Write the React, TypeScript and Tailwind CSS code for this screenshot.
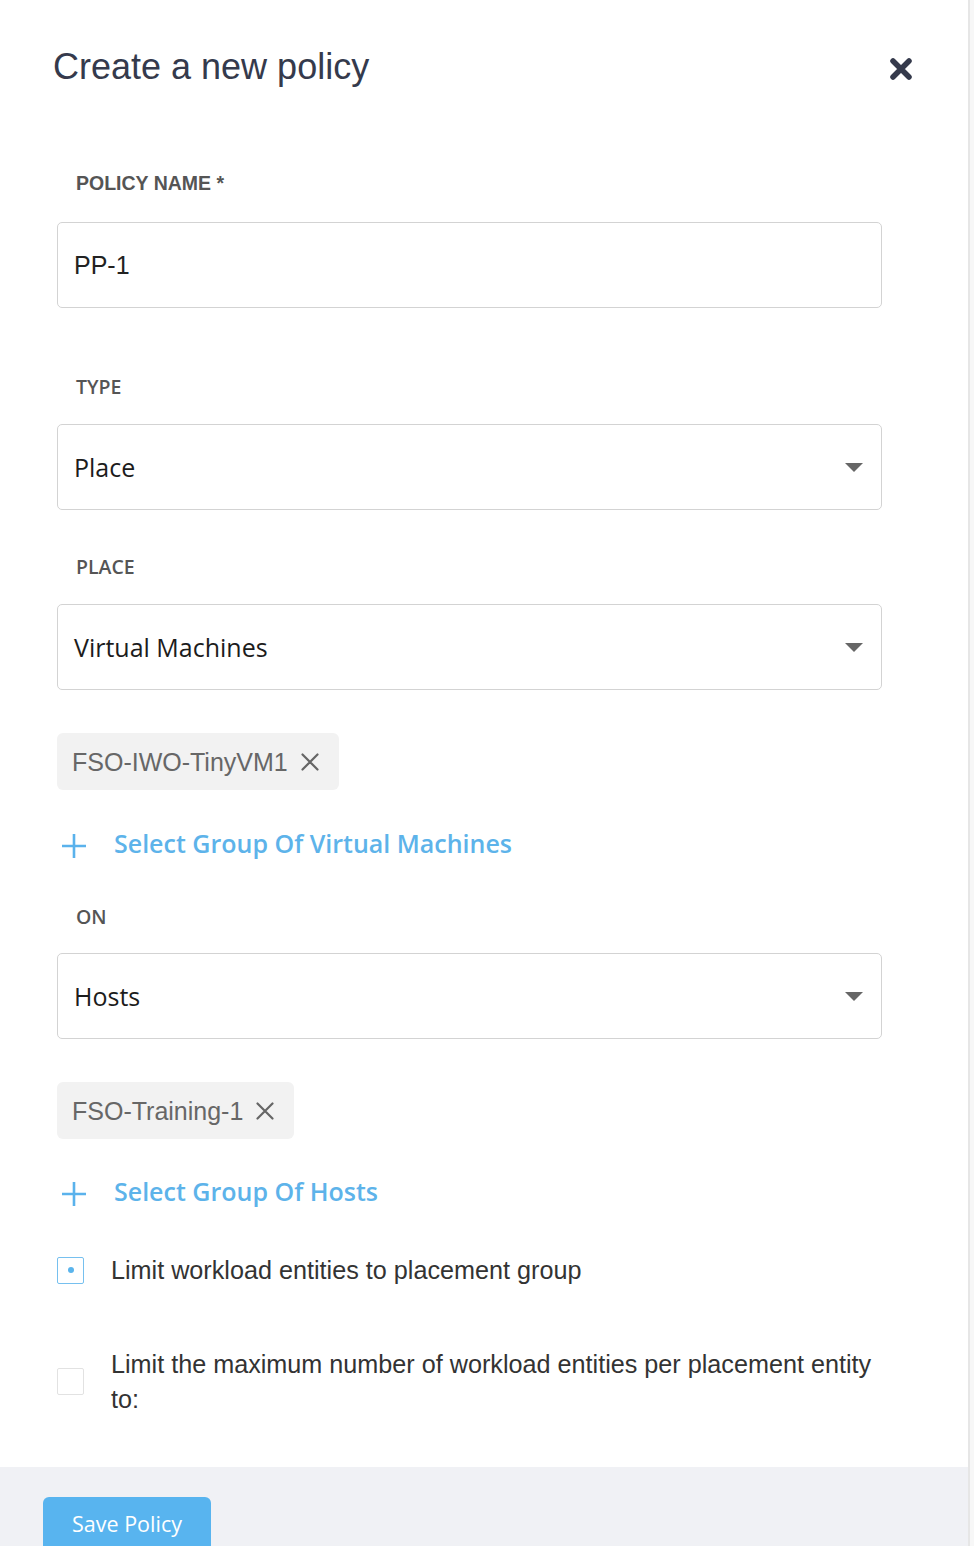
import React from "react";

const LIB = "font-['Liberation_Sans',Arial,sans-serif]";
const OPEN = "font-['Open_Sans',sans-serif]";

function Caret() {
  return (
    <svg width="18" height="9" viewBox="0 0 18 9" className="shrink-0">
      <path d="M0 0 H18 L9 9 Z" fill="#666666" />
    </svg>
  );
}

function SelectBox({ value, className = "" }: { value: string; className?: string }) {
  return (
    <div
      className={`h-[86px] w-[825px] rounded-[5px] border border-[#d3d3d3] bg-white flex items-center justify-between pl-[16px] pr-[18px] ${className}`}
    >
      <span className={`${OPEN} text-[25px] leading-[30px] text-[#1c1c1c]`}>{value}</span>
      <Caret />
    </div>
  );
}

function Label({ children, className = "" }: { children: React.ReactNode; className?: string }) {
  return (
    <div className={`${OPEN} pl-[19px] text-[19.5px] leading-[20px] font-semibold text-[#555555] ${className}`}>
      {children}
    </div>
  );
}

function Chip({ text, className = "" }: { text: string; className?: string }) {
  return (
    <div className={`flex ${className}`}>
      <div className="h-[57px] rounded-[6px] bg-[#f2f2f2] flex items-center pl-[15px] pr-[20px] gap-[13px]">
        <span className={`${LIB} text-[25px] leading-[30px] text-[#676767]`}>{text}</span>
        <svg width="18" height="18" viewBox="0 0 18 18">
          <path d="M1.5 1.5 L16.5 16.5 M16.5 1.5 L1.5 16.5" stroke="#666666" strokeWidth="2.2" strokeLinecap="round" />
        </svg>
      </div>
    </div>
  );
}

function AddLink({ text, className = "" }: { text: string; className?: string }) {
  return (
    <div className={`h-[40px] flex items-center ${className}`}>
      <svg width="26" height="26" viewBox="0 0 26 26" className="ml-[4px] mt-[6px] shrink-0">
        <path d="M13 1 V25 M1 13 H25" stroke="#5ab2ec" strokeWidth="2.6" />
      </svg>
      <span className={`${OPEN} ml-[27px] text-[25px] leading-[30px] font-semibold text-[#5db3ea]`}>{text}</span>
    </div>
  );
}

export default function App() {
  return (
    <div className="h-[1546px] w-[974px] overflow-hidden flex bg-white">
      <div className="w-[968px] flex flex-col">
        <div className="flex-1 flex flex-col pl-[57px]">
          {/* Header */}
          <div className="flex items-start justify-between pt-[47px] pr-[55px] ml-[-4px]">
            <h1 className={`${LIB} text-[36px] leading-[40px] text-[#353a4c] font-normal`}>Create a new policy</h1>
            <svg width="24" height="24" viewBox="0 0 24 24" className="mt-[10px]">
              <path d="M4 4 L20 20 M20 4 L4 20" stroke="#353a4c" strokeWidth="5.5" strokeLinecap="round" />
            </svg>
          </div>

          <div className={`${LIB} mt-[85.5px] pl-[19px] text-[19.5px] leading-[20px] font-bold text-[#555555]`}>
            POLICY NAME *
          </div>
          <div className="mt-[29.5px] h-[86px] w-[825px] rounded-[5px] border border-[#d3d3d3] flex items-center pl-[16px]">
            <span className={`${LIB} text-[25px] leading-[30px] text-[#222222]`}>PP-1</span>
          </div>

          <Label className="mt-[68.5px]">TYPE</Label>
          <SelectBox value="Place" className="mt-[27.5px]" />

          <Label className="mt-[46.5px]">PLACE</Label>
          <SelectBox value="Virtual Machines" className="mt-[27.5px]" />

          <Chip text="FSO-IWO-TinyVM1" className="mt-[43px]" />
          <AddLink text="Select Group Of Virtual Machines" className="mt-[33px]" />

          <Label className="mt-[43.5px]">ON</Label>
          <SelectBox value="Hosts" className="mt-[26.5px]" />

          <Chip text="FSO-Training-1" className="mt-[43px]" />
          <AddLink text="Select Group Of Hosts" className="mt-[32px]" />

          <div className="mt-[45px] h-[28px] flex items-center">
            <div className="w-[27px] h-[27px] rounded-[2px] border-[1.5px] border-[#76c0ef] flex items-center justify-center">
              <div className="w-[6px] h-[6px] rounded-full bg-[#5ab4ec]" />
            </div>
            <span className={`${LIB} ml-[27px] text-[25.2px] leading-[35px] text-[#333333]`}>
              Limit workload entities to placement group
            </span>
          </div>

          <div className="mt-[62.5px] flex items-center">
            <div className="w-[27px] h-[27px] rounded-[2px] border-[1.5px] border-[#e2e2e2] shrink-0" />
            <span className={`${LIB} ml-[27px] w-[770px] text-[25.2px] leading-[35px] text-[#333333]`}>
              Limit the maximum number of workload entities per placement entity to:
            </span>
          </div>
        </div>

        {/* Footer */}
        <div className="h-[79px] bg-[#f0f1f5] pl-[43px] pt-[30px] shrink-0">
          <button className={`${OPEN} h-[56px] w-[168px] rounded-[6px] bg-[#58b4ef] text-white text-[21.5px] leading-[28px] pb-[2px]`}>
            Save Policy
          </button>
        </div>
      </div>
      <div className="w-[6px] border-l-2 border-[#e6e6e6] bg-[#f7f7f7]" />
    </div>
  );
}
